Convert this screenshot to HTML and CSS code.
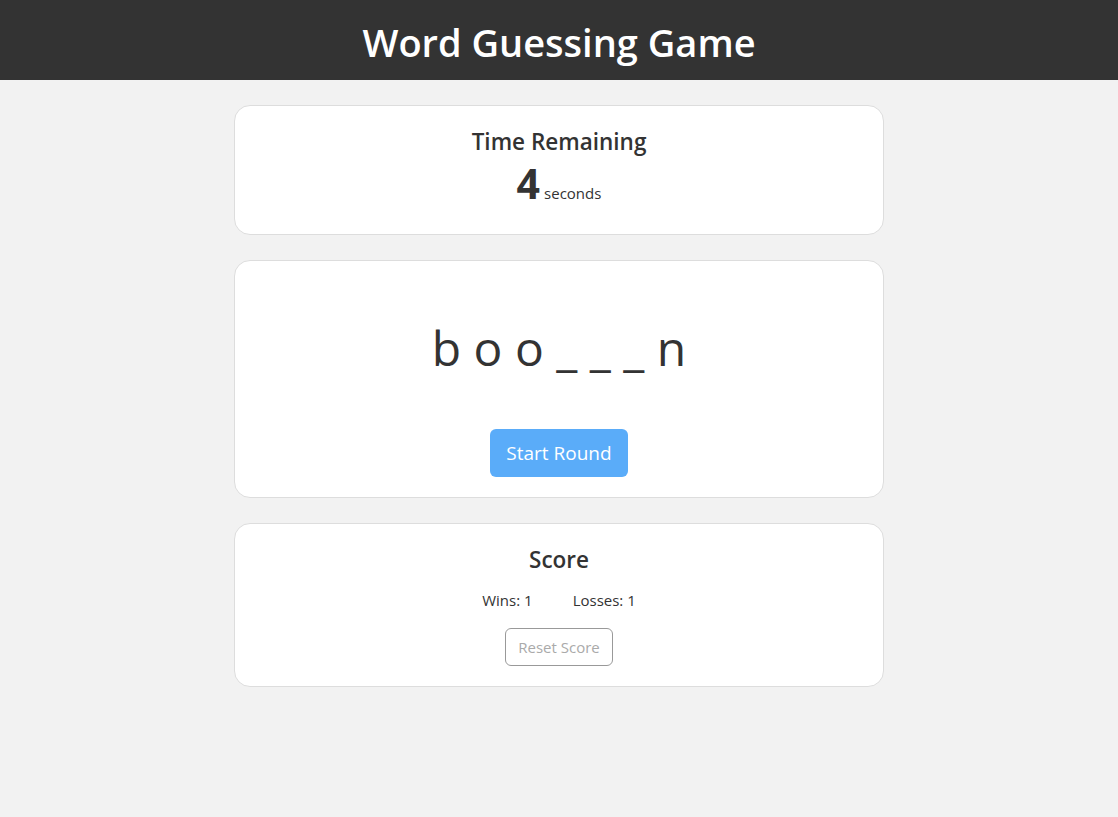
FILE: index.html
```html
<!DOCTYPE html>
<html lang="en">
<head>
<meta charset="utf-8">
<title>Word Guessing Game</title>
<link rel="stylesheet" href="styles.css">
</head>
<body>
<header class="topbar">
  <h1 class="title">Word Guessing Game</h1>
</header>
<main class="container">
  <section class="card timer-card">
    <h2 class="card-title">Time Remaining</h2>
    <div class="timer"><span class="timer-value">4</span><span class="timer-unit">seconds</span></div>
  </section>
  <section class="card word-card">
    <div class="word">b o o _ _ _ n</div>
    <button class="btn-start" type="button">Start Round</button>
  </section>
  <section class="card score-card">
    <h2 class="card-title">Score</h2>
    <div class="score-row">
      <span class="score-item">Wins: <span class="score-num">1</span></span>
      <span class="score-item">Losses: <span class="score-num">1</span></span>
    </div>
    <button class="btn-reset" type="button">Reset Score</button>
  </section>
</main>
</body>
</html>
```
FILE: styles.css
```css
* { box-sizing: border-box; }
html, body { margin: 0; padding: 0; }
body {
  background: #f2f2f2;
  font-family: "Open Sans", "Noto Sans", "Liberation Sans", sans-serif;
  color: #333;
}
.topbar {
  background: #333;
  height: 80px;
  display: flex;
  align-items: center;
  justify-content: center;
  padding-top: 4px;
}
.title {
  margin: 0;
  color: #fff;
  font-size: 38px;
  font-weight: 600;
  line-height: 1;
}
.container {
  width: 650px;
  margin: 25px auto 0;
  display: flex;
  flex-direction: column;
  gap: 25px;
}
.card {
  background: #fff;
  border: 1px solid #ddd;
  border-radius: 16px;
  display: flex;
  flex-direction: column;
  align-items: center;
}
.card-title {
  margin: 0;
  font-size: 22.5px;
  font-weight: 600;
  line-height: 30px;
}
.timer-card { height: 130px; padding-top: 21px; }
.timer {
  display: flex;
  align-items: baseline;
  gap: 4px;
  line-height: 50px;
  margin-top: 1px;
}
.timer-value { font-size: 41px; font-weight: 700; }
.timer-unit { font-size: 15px; }
.word-card { height: 238px; padding-top: 55px; }
.word {
  font-size: 48px;
  line-height: 64px;
  font-weight: 400;
}
.btn-start {
  margin-top: 49px;
  width: 138px;
  height: 48px;
  border: none;
  border-radius: 6px;
  background: #5aacf9;
  color: #fff;
  font-family: inherit;
  font-size: 19px;
}
.score-card { height: 164px; padding-top: 21px; }
.score-row {
  display: flex;
  gap: 40px;
  margin-top: 15px;
  font-size: 15px;
  line-height: 20px;
}
.btn-reset {
  margin-top: 18px;
  width: 108px;
  height: 38px;
  background: #fff;
  border: 1px solid #999;
  border-radius: 6px;
  color: #aaa;
  font-family: inherit;
  font-size: 15px;
}
```
